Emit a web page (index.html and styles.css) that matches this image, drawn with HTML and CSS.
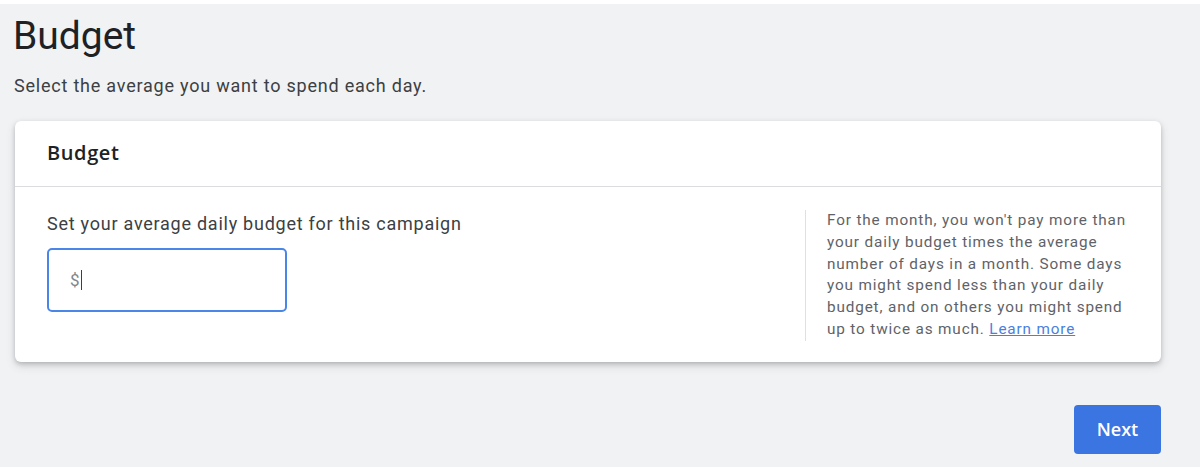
FILE: index.html
```html
<!DOCTYPE html>
<html>
<head>
<meta charset="utf-8">
<link rel="stylesheet" href="styles.css">
</head>
<body>
<div class="page">
  <h1 class="title">Budget</h1>
  <p class="subtitle">Select the average you want to spend each day.</p>
  <div class="card">
    <div class="card-header">Budget</div>
    <div class="card-body">
      <div class="main">
        <div class="label">Set your average daily budget for this campaign</div>
        <div class="input"><span class="cur">$</span><span class="caret"></span></div>
      </div>
      <div class="aside">For the month, you won't pay more than your daily budget times the average number of days in a month. Some days you might spend less than your daily budget, and on others you might spend up to twice as much. <a href="#" class="link">Learn more</a></div>
    </div>
  </div>
  <div class="actions"><button class="next">Next</button></div>
</div>
</body>
</html>
```
FILE: styles.css
```css
html, body { margin: 0; padding: 0; background: #fff; }
body { font-family: Roboto, "Noto Sans", Arial, sans-serif; }
.page {
  background: #f1f2f4;
  margin: 4px 2px 0 0;
  height: 463px;
  padding: 0 0 0 15px;
  box-sizing: border-box;
  overflow: hidden;
}
.title {
  margin: 0 0 0 -2px;
  padding-top: 11px;
  font-size: 39px;
  font-weight: 400;
  line-height: 42px;
  color: #202124;
}
.subtitle {
  margin: 18px 0 0 -1px;
  font-size: 18px;
  line-height: 22px;
  letter-spacing: 0.78px;
  color: #3c4043;
}
.card {
  margin-top: 24px;
  width: 1146px;
  background: #fff;
  border-radius: 6px;
  box-shadow: 0 2px 4px rgba(60,64,67,0.25), 0 4px 10px rgba(60,64,67,0.15);
}
.card-header {
  height: 66px;
  box-sizing: border-box;
  padding: 20px 32px 0;
  font-size: 20px;
  font-weight: 600;
  line-height: 24px;
  letter-spacing: 0.6px;
  color: #202124;
  border-bottom: 1px solid #dadce0;
  font-family: "Open Sans", Roboto, sans-serif;
}
.card-body {
  display: flex;
  padding: 23px 0 21px 32px;
}
.main { flex: 1; }
.label {
  font-size: 18px;
  line-height: 24px;
  letter-spacing: 0.75px;
  color: #3c4043;
  margin-top: 2px;
}
.input {
  margin-top: 12px;
  width: 240px;
  height: 64px;
  box-sizing: border-box;
  border: 2px solid #4a86e8;
  border-radius: 5px;
  display: flex;
  align-items: center;
  padding-left: 21px;
}
.cur { font-size: 17px; color: #80868b; }
.caret { display: inline-block; width: 1px; height: 20px; background: #3c4043; margin-left: 1px; }
.aside {
  width: 356px;
  flex: none;
  box-sizing: border-box;
  border-left: 1px solid #e0e0e0;
  padding: 0 26px 0 21px;
  font-size: 15.3px;
  line-height: 21.8px;
  color: #5f6368;
  letter-spacing: 0.85px;
}
.link { color: #4a7fe0; text-decoration: underline; }
.actions {
  display: flex;
  justify-content: flex-end;
  width: 1146px;
  margin-top: 43px;
}
.next {
  width: 87px;
  height: 49px;
  border: none;
  border-radius: 4px;
  background: #3a75e1;
  color: #fff;
  font-family: "Open Sans", Roboto, sans-serif;
  font-size: 18px;
  font-weight: 600;
  padding: 0;
}
```
